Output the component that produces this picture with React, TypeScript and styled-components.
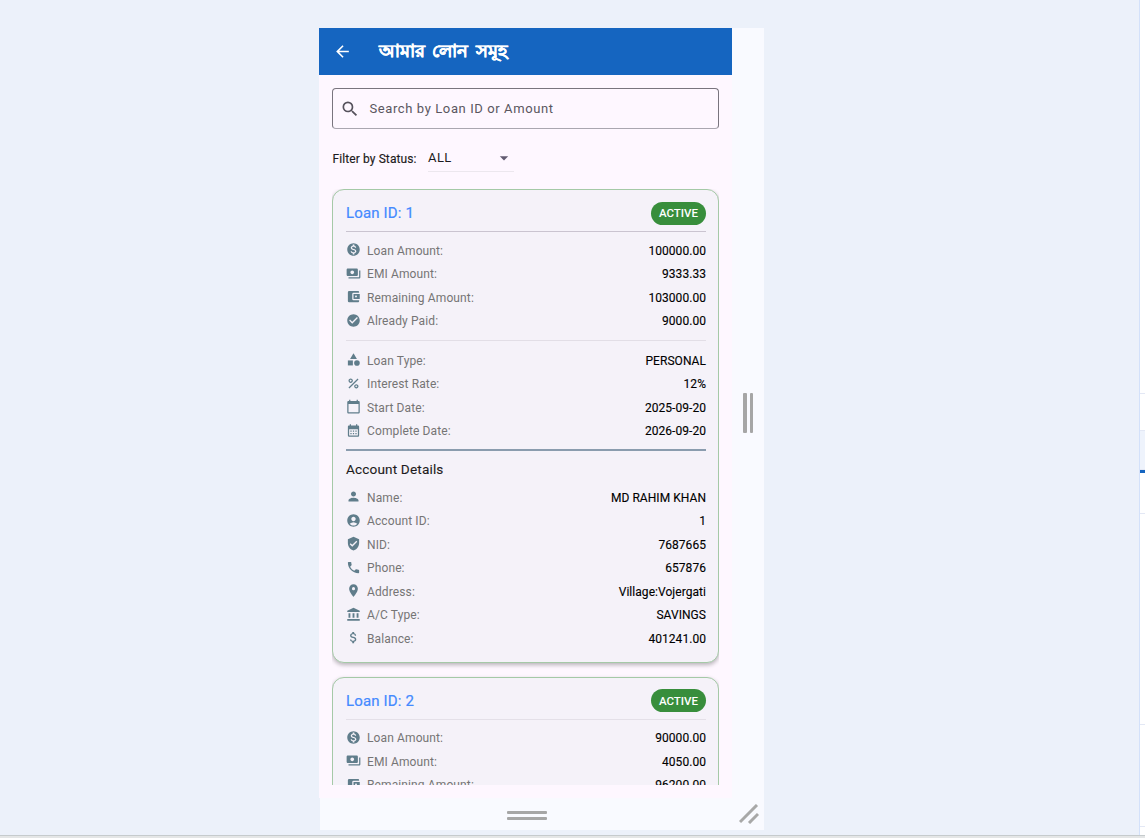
import React from "react";
import styled, { createGlobalStyle } from "styled-components";
import {
  MdAccountBalance,
  MdAccountBalanceWallet,
  MdAccountCircle,
  MdArrowBack,
  MdArrowDropDown,
  MdAttachMoney,
  MdCalendarMonth,
  MdCalendarToday,
  MdCategory,
  MdCheckCircle,
  MdLocationOn,
  MdMonetizationOn,
  MdPayments,
  MdPercent,
  MdPerson,
  MdPhone,
  MdSearch,
  MdVerifiedUser,
} from "react-icons/md";

const GlobalStyle = createGlobalStyle`
  html, body {
    margin: 0;
    padding: 0;
    height: 100%;
    overflow: hidden;
    background: #ecf1fa;
    font-family: Roboto, "Noto Sans", "Liberation Sans", sans-serif;
  }
  * {
    box-sizing: border-box;
  }
`;

type Row = { icon: React.ReactNode; label: string; value: string };

const amountRows = (amount: string, emi: string, remaining: string, paid: string): Row[] => [
  { icon: <MdMonetizationOn />, label: "Loan Amount:", value: amount },
  { icon: <MdPayments />, label: "EMI Amount:", value: emi },
  { icon: <MdAccountBalanceWallet />, label: "Remaining Amount:", value: remaining },
  { icon: <MdCheckCircle />, label: "Already Paid:", value: paid },
];

const termRows: Row[] = [
  { icon: <MdCategory />, label: "Loan Type:", value: "PERSONAL" },
  { icon: <MdPercent />, label: "Interest Rate:", value: "12%" },
  { icon: <MdCalendarToday />, label: "Start Date:", value: "2025-09-20" },
  { icon: <MdCalendarMonth />, label: "Complete Date:", value: "2026-09-20" },
];

const accountRows: Row[] = [
  { icon: <MdPerson />, label: "Name:", value: "MD RAHIM KHAN" },
  { icon: <MdAccountCircle />, label: "Account ID:", value: "1" },
  { icon: <MdVerifiedUser />, label: "NID:", value: "7687665" },
  { icon: <MdPhone />, label: "Phone:", value: "657876" },
  { icon: <MdLocationOn />, label: "Address:", value: "Village:Vojergati" },
  { icon: <MdAccountBalance />, label: "A/C Type:", value: "SAVINGS" },
  { icon: <MdAttachMoney />, label: "Balance:", value: "401241.00" },
];

const InfoRows = ({ rows, $top = 7 }: { rows: Row[]; $top?: number }) => (
  <RowList $top={$top}>
    {rows.map((row) => (
      <InfoRow key={row.label}>
        <RowIcon>{row.icon}</RowIcon>
        <RowLabel>{row.label}</RowLabel>
        <RowValue>{row.value}</RowValue>
      </InfoRow>
    ))}
  </RowList>
);

const App = () => {
  return (
    <>
      <GlobalStyle />
      <Page>
        <Workspace>
          <Frame>
            <Screen>
              <AppBar>
                <BackIcon />
                <AppTitle>আমার লোন সমূহ</AppTitle>
              </AppBar>
              <Content>
                <SearchBox>
                  <SearchIcon />
                  <SearchText>Search by Loan ID or Amount</SearchText>
                </SearchBox>
                <FilterRow>
                  <FilterLabel>Filter by Status:</FilterLabel>
                  <FilterSelect>
                    ALL
                    <DropIcon />
                  </FilterSelect>
                </FilterRow>
                <Cards>
                  <Card>
                    <CardHead>
                      <LoanTitle>Loan ID: 1</LoanTitle>
                      <StatusChip>ACTIVE</StatusChip>
                    </CardHead>
                    <InfoRows rows={amountRows("100000.00", "9333.33", "103000.00", "9000.00")} />
                    <ThinRule />
                    <InfoRows rows={termRows} $top={8.5} />
                    <ThickRule />
                    <SectionTitle>Account Details</SectionTitle>
                    <InfoRows rows={accountRows} $top={7} />
                  </Card>
                  <Card>
                    <CardHead $soft>
                      <LoanTitle>Loan ID: 2</LoanTitle>
                      <StatusChip>ACTIVE</StatusChip>
                    </CardHead>
                    <InfoRows rows={amountRows("90000.00", "4050.00", "96200.00", "0.00")} />
                  </Card>
                </Cards>
              </Content>
            </Screen>
            <SideHandle>
              <GripBar />
              <GripBar />
            </SideHandle>
            <BottomHandle>
              <BottomGrip>
                <GripLine />
                <GripLine />
              </BottomGrip>
            </BottomHandle>
            <Corner>
              <svg width="20" height="20" viewBox="0 0 20 20" fill="none" stroke="#a8a8a8" strokeWidth="3">
                <path d="M1 18 L18 1" />
                <path d="M10 19 L19 10" />
              </svg>
            </Corner>
          </Frame>
        </Workspace>
        <SidePanel>
          <SideCell $height={394} />
          <SideCell $height={37} />
          <SideCell $height={39} $tint />
          <SideAccent />
          <SideCell $height={41} />
          <SideCell $height={211} />
          <SideCell $height={102} />
        </SidePanel>
        <BottomEdge />
      </Page>
    </>
  );
};

const Page = styled.div`
  position: relative;
  width: 1145px;
  height: 838px;
  display: flex;
  background: #ecf1fa;
  overflow: hidden;
`;

const Workspace = styled.div`
  flex: 1;
  padding: 28px 0 0 319px;
`;

const Frame = styled.div`
  width: 445px;
  height: 802px;
  display: grid;
  grid-template-columns: 413px 32px;
  grid-template-rows: 770px 32px;
`;

const Screen = styled.div`
  display: flex;
  flex-direction: column;
  background: #fef7ff;
  overflow: hidden;
`;

const AppBar = styled.header`
  height: 47px;
  flex: none;
  display: flex;
  align-items: center;
  padding-left: 14px;
  background: #1565c0;
  color: #ffffff;
`;

const BackIcon = styled(MdArrowBack)`
  width: 19px;
  height: 19px;
`;

const AppTitle = styled.h1`
  margin: 0 0 2px 27px;
  font-size: 18px;
  font-weight: 700;
  word-spacing: 3px;
  line-height: 1;
  -webkit-text-stroke: 0.3px #ffffff;
`;

const Content = styled.main`
  flex: 1;
  min-height: 0;
  display: flex;
  flex-direction: column;
  padding: 13px 13px 13px;
`;

const SearchBox = styled.div`
  height: 41px;
  flex: none;
  display: flex;
  align-items: center;
  padding-left: 6.5px;
  border: 1px solid #79747e;
  border-bottom-color: #aaa6b0;
  border-radius: 4px;
`;

const SearchIcon = styled(MdSearch)`
  width: 20px;
  height: 20px;
  color: #56525c;
`;

const SearchText = styled.span`
  margin-left: 10px;
  font-size: 13px;
  letter-spacing: 0.6px;
  color: #5a5660;
`;

const FilterRow = styled.div`
  flex: none;
  height: 42px;
  margin-top: 9px;
  padding-left: 0.5px;
  display: flex;
  align-items: center;
`;

const FilterLabel = styled.span`
  font-size: 12px;
  letter-spacing: 0.1px;
  -webkit-text-stroke: 0.15px #1d1b20;
  color: #1d1b20;
`;

const FilterSelect = styled.div`
  width: 86px;
  height: 28px;
  margin: 0 0 2px 11.5px;
  display: flex;
  align-items: center;
  justify-content: space-between;
  border-bottom: 1px solid #ece7ee;
  font-size: 13px;
  letter-spacing: 0.4px;
  color: #1d1b20;
`;

const DropIcon = styled(MdArrowDropDown)`
  width: 20px;
  height: 20px;
  color: #625b71;
`;

const Cards = styled.div`
  flex: 1;
  min-height: 0;
  margin-top: 9px;
  display: flex;
  flex-direction: column;
  gap: 13.5px;
  overflow: hidden;
`;

const Card = styled.article`
  flex: none;
  padding: 0 12px 11.5px 13px;
  margin: 0;
  background: #f5f2f9;
  border: 1px solid #a5c9a7;
  border-radius: 12px;
  box-shadow: 0 2px 4px rgba(0, 0, 0, 0.28);
`;

const CardHead = styled.div<{ $soft?: boolean }>`
  height: 42px;
  padding-top: 5px;
  display: flex;
  align-items: center;
  justify-content: space-between;
  border-bottom: 1px solid ${(p) => (p.$soft ? "#e4e0e8" : "#cac4d0")};
`;

const LoanTitle = styled.h2`
  margin: 0;
  font-size: 15px;
  font-weight: 400;
  letter-spacing: 0.15px;
  -webkit-text-stroke: 0.2px #448aff;
  color: #448aff;
`;

const StatusChip = styled.span`
  width: 55px;
  height: 23px;
  display: flex;
  align-items: center;
  justify-content: center;
  background: #388e3c;
  border-radius: 12px;
  font-size: 11.5px;
  font-weight: 500;
  color: #ffffff;
`;

const RowList = styled.div<{ $top: number }>`
  display: flex;
  flex-direction: column;
  padding-top: ${(p) => p.$top}px;
`;

const InfoRow = styled.div`
  height: 23.5px;
  display: flex;
  align-items: center;
`;

const RowIcon = styled.span`
  width: 21px;
  flex: none;
  display: flex;
  align-items: center;
  color: #607d8b;

  svg {
    width: 15px;
    height: 15px;
    margin-left: -0.5px;
    transform: translateY(-1px);
  }
`;

const RowLabel = styled.span`
  flex: 1;
  font-size: 12px;
  letter-spacing: 0.12px;
  color: #757575;
`;

const RowValue = styled.span`
  font-size: 12px;
  letter-spacing: 0.05px;
  -webkit-text-stroke: 0.12px #000000;
  color: #000000;
`;

const ThinRule = styled.hr`
  height: 1px;
  margin: 6.5px 0 0;
  border: 0;
  background: #e2dee6;
`;

const ThickRule = styled.hr`
  height: 2px;
  margin: 6px 0 0;
  border: 0;
  background: #8a9cae;
`;

const SectionTitle = styled.h3`
  margin: 8px 0 0;
  height: 20px;
  line-height: 20px;
  font-size: 13.6px;
  font-weight: 400;
  letter-spacing: 0.15px;
  -webkit-text-stroke: 0.1px #1d1b20;
  color: #1d1b20;
`;

const SideHandle = styled.div`
  display: flex;
  align-items: center;
  justify-content: center;
  gap: 3px;
  background: #f9faff;
`;

const GripBar = styled.span`
  width: 3.5px;
  height: 40px;
  border-radius: 1px;
  background: #a6a6a6;
`;

const BottomHandle = styled.div`
  display: flex;
  align-items: flex-start;
  justify-content: center;
  margin-left: 1px;
  padding: 13px 0 0 2px;
  background: #f9faff;
`;

const BottomGrip = styled.div`
  width: 40px;
  display: flex;
  flex-direction: column;
  gap: 3px;
`;

const GripLine = styled.span`
  height: 3px;
  border-radius: 1px;
  background: #a6a6a6;
`;

const Corner = styled.div`
  display: flex;
  align-items: flex-start;
  padding: 6px 0 0 7px;
  background: #f9faff;
`;

const SidePanel = styled.aside`
  width: 6px;
  height: 835px;
  flex: none;
  display: flex;
  flex-direction: column;
  background: #ffffff;
  border-left: 1px solid #d3e1fa;
`;

const SideCell = styled.div<{ $height: number; $tint?: boolean }>`
  flex: none;
  height: ${(p) => p.$height}px;
  background: ${(p) => (p.$tint ? "#eef3fc" : "#ffffff")};
  border-bottom: 1px solid #e3e8f5;
`;

const SideAccent = styled.div`
  flex: none;
  height: 3px;
  background: #1565c0;
`;

const BottomEdge = styled.div`
  position: absolute;
  left: 0;
  right: 0;
  bottom: 0;
  height: 3px;
  background: #e4e6e6;
  border-top: 1px solid #c6cbcd;
`;

export default App;
